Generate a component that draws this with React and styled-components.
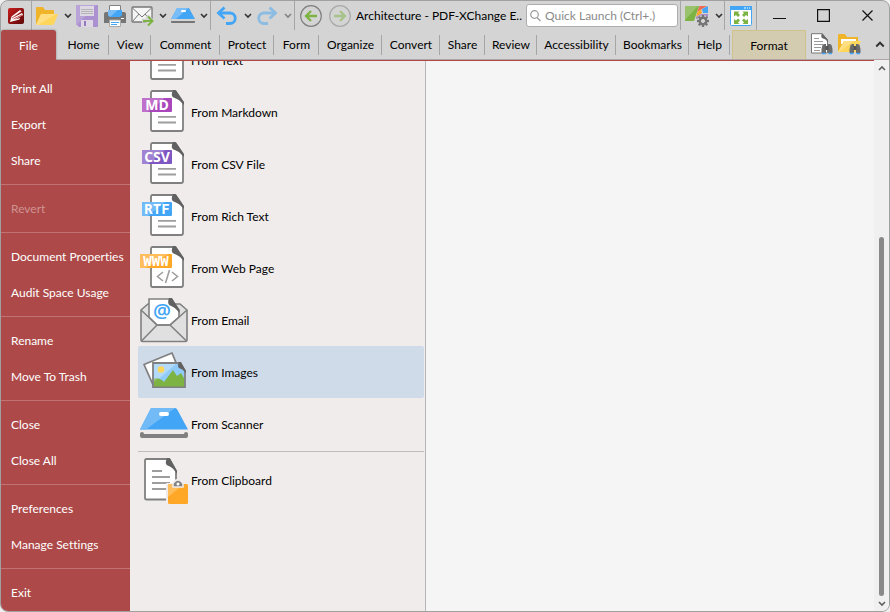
import React, { useState } from 'react';
import styled, { createGlobalStyle, css } from 'styled-components';

const GlobalStyle = createGlobalStyle`
  * {
    box-sizing: border-box;
  }

  body {
    margin: 0;
    background-color: #f0f0f0;
    font-family: Lato, 'Open Sans', sans-serif;
    font-size: 12px;
    font-variant-ligatures: none;
    color: #000;
  }

  button,
  input {
    font: inherit;
    font-variant-ligatures: none;
    color: inherit;
  }
`;

const Window = styled.div`
  display: flex;
  flex-direction: column;
  height: 100vh;
  border: 1px solid #a0a0a0;
  border-radius: 8px;
  overflow: hidden;
  background-color: #d4d4d4;
`;

const TitleBar = styled.header`
  display: flex;
  align-items: center;
  flex: 0 0 29px;
`;

const PlainButton = styled.button`
  display: flex;
  align-items: center;
  justify-content: center;
  flex: none;
  padding: 0;
  border: none;
  background: none;
  white-space: nowrap;
`;

const ToolButton = styled(PlainButton)`
  width: ${(props) => props.$width || 28}px;
  height: 28px;

  svg {
    flex: none;
  }

  &:disabled {
    opacity: 0.5;
  }
`;

const Separator = styled.span`
  flex: 0 0 1px;
  align-self: stretch;
  background-color: #a6a6a6;
`;

const DocumentTitle = styled.h1`
  flex: 1;
  min-width: 0;
  margin: 0 0 0 3px;
  font-size: 12px;
  font-weight: 400;
  white-space: nowrap;
`;

const SearchBox = styled.label`
  display: flex;
  align-items: center;
  flex: none;
  width: 152px;
  height: 23px;
  margin-right: 2px;
  padding: 0 3px;
  gap: 4px;
  border: 1px solid #adadad;
  border-radius: 3px;
  background-color: #fff;
`;

const SearchInput = styled.input`
  flex: 1;
  width: 100%;
  min-width: 0;
  padding: 0;
  border: none;
  outline: none;
  background: none;

  &::placeholder {
    color: #8a8a8a;
    opacity: 1;
  }
`;

const Ribbon = styled.nav`
  display: flex;
  flex: 0 0 30px;
  border-bottom: 1px solid #b0a5a5;
`;

const RibbonTab = styled(PlainButton)`
  width: ${(props) => props.$width}px;
  background: linear-gradient(#a6a6a6, #a6a6a6) right center / 1px 20px no-repeat;
`;

const FileTab = styled(PlainButton)`
  width: 55px;
  margin: 0 2px -1px 0;
  border-radius: 3px 3px 0 0;
  box-shadow: 0 0 2px #777;
  background-color: #ad4a49;
  color: #fff;
`;

const FormatTab = styled(PlainButton)`
  width: 74px;
  margin: 0 2px;
  border: 1px solid #cfc38c;
  border-bottom: none;
  background-color: #d4ccb0;
`;

const Spacer = styled.span`
  flex: 1;
`;

const Body = styled.div`
  display: flex;
  flex: 1;
  min-height: 0;
`;

const Sidebar = styled.aside`
  flex: 0 0 129px;
  padding-top: 5px;
  overflow: hidden;
  background-color: #ad4a49;
  color: #fff;
`;

const SidebarGroup = styled.div`
  padding: 5px 0 6px;

  & + & {
    border-top: 1px solid #bf7473;
  }
`;

const SidebarItem = styled(PlainButton)`
  justify-content: flex-start;
  width: 100%;
  height: 36px;
  padding-left: 10px;

  &:disabled {
    color: #cf9292;
  }
`;

const Content = styled.div`
  display: flex;
  flex: 1;
  min-width: 0;
  border-top: 1px solid #ad4a49;
`;

const Sources = styled.section`
  flex: 0 0 296px;
  padding: 0 1px 0 8px;
  overflow: hidden;
  border-right: 1px solid #b8b8b8;
  background-color: #f0eceb;
`;

/* the list is scrolled by half a row */
const SourceList = styled.ul`
  margin: -27px 0 0;
  padding: 0;
  list-style: none;
`;

const SourceItem = styled.li`
  ${(props) =>
    props.$separated &&
    css`
      margin-top: 1px;
      padding-top: 2px;
      border-top: 1px solid #bdbdbd;
    `}
`;

const SourceButton = styled(PlainButton)`
  justify-content: flex-start;
  width: 100%;
  height: 52px;
  gap: 3px;
  border-radius: 2px;
  background-color: ${(props) => (props.$active ? '#cfdbe9' : 'transparent')};
`;

const Workspace = styled.main`
  flex: 1;
  background-color: #f5f5f5;
`;

const ScrollBar = styled.div`
  display: flex;
  flex-direction: column;
  align-items: center;
  flex: 0 0 15px;
  margin-top: -1px;
  background-color: #f0f0f0;
`;

const ScrollButton = styled(PlainButton)`
  width: 15px;
  height: 15px;
`;

const Track = styled.div`
  display: flex;
  flex-direction: column;
  justify-content: flex-end;
  flex: 1;
`;

const Thumb = styled.div`
  width: 5px;
  height: 69%;
  border-radius: 3px;
  background-color: #898989;
`;

const Chevron = ({ up, size = 8, color = '#333' }) => (
  <svg width={size} height={size} viewBox="0 0 8 8" fill="none" stroke={color} strokeWidth="1.6">
    <path d={up ? 'M1 6L4 3L7 6' : 'M1 2L4 5L7 2'} />
  </svg>
);

const AppIcon = () => (
  <svg width="18" height="18" viewBox="0 0 18 18">
    <defs>
      <linearGradient id="app" x2="1" y2="1">
        <stop stopColor="#c8201f" />
        <stop offset="1" stopColor="#5e0708" />
      </linearGradient>
    </defs>
    <rect x="1" y="1" width="16" height="16" rx="2" fill="url(#app)" />
    <path d="M3 15L4.500 9.500L13 3L14.500 4.500L6.500 10.500L15 6L16 8L8 12.500L13 11L12.500 12.500Z" fill="#fff" />
    <path d="M5 11L14 5M6.500 12L15 8" stroke="#a81516" strokeWidth=".7" />
  </svg>
);

const FolderIcon = () => (
  <svg width="24" height="20" viewBox="0 0 24 20">
    <path d="M1 2Q1 1 2 1H8L10 4H18Q19 4 19 5V18H1Z" fill="#efb42a" />
    <path d="M6 8H23L19 18Q18.500 19 17 19H1Z" fill="#ffd65c" />
    <path d="M6 8H21L3 19H1Z" fill="#ffdf82" />
  </svg>
);

const SaveIcon = () => (
  <svg width="22" height="22" viewBox="0 0 22 22">
    <path d="M1 0H21Q22 0 22 1V21Q22 22 21 22H3L0 19V1Q0 0 1 0Z" fill="#ab91d0" />
    <path d="M0 1Q0 0 1 0H20L1 20L0 19Z" fill="#b9a4d8" />
    <path d="M4 1H18V11H4ZM5 15H17V22H5Z" fill="#ddd8e3" />
    <path d="M5 4.500H17M5 6.500H17M5 8.500H17" stroke="#b5b5b5" />
    <path d="M8 16H10V21H8Z" fill="#9479bd" />
  </svg>
);

const PrintIcon = () => (
  <svg width="22" height="22" viewBox="0 0 22 22">
    <path d="M5.500 .5H16.500V6H5.500Z" fill="#fff" stroke="#808080" />
    <path d="M0 9Q0 7 2 7H20Q22 7 22 9V18H0Z" fill="#757575" />
    <path d="M4 5H18V10L16 12H6L4 10Z" fill="#42a5f5" />
    <path d="M4 5H14L6 12L4 10Z" fill="#78bdf7" />
    <path d="M5.500 15H16.500V21.500H5.500Z" fill="#fff" stroke="#aaa" />
    <path d="M7 17.500H15M7 19.500H13" stroke="#42a5f5" />
    <path d="M17 13.500H20" stroke="#fff" />
  </svg>
);

const MailIcon = () => (
  <svg width="24" height="20" viewBox="0 0 24 20" fill="none">
    <rect x="1" y="1" width="20" height="15" rx="1" fill="#f5f5f5" stroke="#777" strokeWidth="1.300" />
    <path d="M1.500 2L11 11L20.500 2M1.500 15.500L8 8M20.500 15.500L14 8" stroke="#777" />
    <path d="M11 14.500H21M16 10L20.500 14.500L16 19" stroke="#d4d4d4" strokeWidth="4" />
    <path d="M12 15H21M17 10.500L21.500 15L17 19.500" stroke="#7cb342" strokeWidth="2" />
  </svg>
);

const ScanIcon = () => (
  <svg width="24" height="16" viewBox="0 0 24 16">
    <path d="M6.500 0H17.500Q18 0 18.500 1L24 11H0L5.500 1Q6 0 6.500 0Z" fill="#42a5f5" />
    <path d="M6.500 0H17.500L5 11H0L5.500 1Q6 0 6.500 0Z" fill="#78bdf7" />
    <rect x="10" y="2" width="5" height="2" rx="1" fill="#fff" />
    <path d="M1 13V14H23V13" fill="none" stroke="#757575" strokeWidth="2" strokeLinejoin="round" />
  </svg>
);

const UndoIcon = ({ flip }) => (
  <svg width="22" height="20" viewBox="0 0 22 20" fill="none" stroke="#42a5f5" strokeWidth="2.800">
    <g transform={flip ? 'translate(22 0) scale(-1 1)' : undefined}>
      <path d="M8.500 1.500L2.500 7L8.500 12.500" />
      <path d="M3 7H14A5 5 0 0 1 14 17.500H10" />
    </g>
  </svg>
);

const CircleArrow = ({ flip }) => (
  <svg width="22" height="22" viewBox="0 0 22 22" fill="none">
    <circle cx="11" cy="11" r="10.300" stroke="#808080" strokeWidth="1.200" />
    <g transform={flip ? 'translate(22 0) scale(-1 1)' : undefined} stroke="#7cb342" strokeWidth="2.300">
      <path d="M6 11H17M11 6L6 11L11 16" />
    </g>
  </svg>
);

const SearchIcon = () => (
  <svg width="11" height="12" viewBox="0 0 11 12" fill="none" stroke="#999" strokeWidth="1.200">
    <circle cx="4.500" cy="4.500" r="3.800" />
    <path d="M7 7.500L10.500 11" />
  </svg>
);

const gearTeeth = [0, 45, 90, 135, 180, 225, 270, 315];

const WorkspaceIcon = () => (
  <svg width="24" height="22" viewBox="0 0 24 22">
    <path d="M0 1H14L9 16H0Z" fill="#7cb342" />
    <path d="M0 1H13L0 15Z" fill="#98c26b" />
    <path d="M14.500 1H22L12 7Z" fill="#ed6b51" />
    <path d="M12.500 7L16 4.500L17 8L11 12Z" fill="#ffa726" />
    <path d="M17 4L23 1V8H18Z" fill="#42a5f5" />
    <path d="M11 12L16 9H23V14H11Z" fill="#a98bcc" />
    <g transform="translate(18 16)">
      <circle r="6" fill="#d4d4d4" />
      {gearTeeth.map((angle) => (
        <rect key={angle} x="-1.200" y="-6" width="2.400" height="4" fill="#757575" transform={`rotate(${angle})`} />
      ))}
      <circle r="3.300" fill="none" stroke="#757575" strokeWidth="2.200" />
    </g>
  </svg>
);

const FullScreenIcon = () => (
  <svg width="22" height="20" viewBox="0 0 22 20">
    <rect x=".5" y=".5" width="21" height="19" rx="1" fill="#fff" stroke="#42a5f5" />
    <path d="M0 0H22V4H0Z" fill="#42a5f5" />
    <path d="M14 2H16M17 2H18M19 2H20" stroke="#fff" />
    <g fill="#7cb342">
      <path d="M4 5.500H9.500L8 7L10 9L8 11L6 9L4 10.500Z" />
      <path d="M18 5.500H12.500L14 7L12 9L14 11L16 9L18 10.500Z" />
      <path d="M4 18H9.500L8 16.500L10 14.500L8 12.500L6 14.500L4 13Z" />
      <path d="M18 18H12.500L14 16.500L12 14.500L14 12.500L16 14.500L18 13Z" />
    </g>
  </svg>
);

const Binoculars = () => (
  <g>
    <path d="M12.500 12L14 11H16V20H11.500V16ZM18 11H20L21.500 12L22.500 16V20H18Z" fill="#6b6b6b" />
    <path d="M15.500 13H18.500V17H15.500Z" fill="#555" />
    <path d="M12 20.500H15.500M18.500 20.500H22" stroke="#42a5f5" strokeWidth="1.600" />
  </g>
);

const FindDocIcon = () => (
  <svg width="24" height="22" viewBox="0 0 24 22">
    <path d="M1.500 .7H12L17.500 7V20H1.500Z" fill="#fff" stroke="#777" />
    <path d="M12 0Q10.500 4 12 5Q16 6 18 9V7Z" fill="#666" />
    <path d="M4 5.500H9M4 8.500H13M4 11.500H13M4 14.500H11M4 17.500H10" stroke="#999" />
    <Binoculars />
  </svg>
);

const FindFolderIcon = () => (
  <svg width="24" height="22" viewBox="0 0 24 22">
    <path d="M0 2Q0 1 1 1H7L9 4H20V18H0Z" fill="#efb42a" />
    <path d="M3 6H18V11H3Z" fill="#fff" />
    <path d="M6 8H23L18 19H0Z" fill="#ffd65c" />
    <path d="M6 8H16L1 19H0Z" fill="#ffdf82" />
    <Binoculars />
  </svg>
);

const WindowIcon = ({ d }) => (
  <svg width="13" height="13" viewBox="0 0 13 13" fill="none" stroke="#111" strokeWidth="1.200">
    <path d={d} />
  </svg>
);

const ListIcon = ({ children }) => (
  <svg width="50" height="52" viewBox="0 0 50 52">
    {children}
  </svg>
);

const FileIcon = ({ label, color, light, wide, mono }) => (
  <ListIcon>
    <path
      d="M14.500 5H37L45 17V43Q45 45 43 45H14.500Q13 45 13 43V7Q13 5 14.500 5Z"
      fill="#fff"
      stroke="#808080"
      strokeWidth="1.800"
    />
    <path d="M35 4Q32.500 9 35 11.200Q41 13 46 19V16L38 4.200Z" fill="#616161" />
    {wide ? (
      <path
        d="M25 30L19.500 34.500L25 39M34 30L39.500 34.500L34 39M31.500 28L27.500 41"
        fill="none"
        stroke="#9e9e9e"
        strokeWidth="1.600"
      />
    ) : (
      <path d="M20 30.800H38M20 36.500H38" stroke="#9e9e9e" strokeWidth="1.800" />
    )}
    <rect x={wide ? 2 : 4} y="12" width={wide ? 32 : 30} height="14" rx="1" fill={color} />
    <path d={wide ? 'M3 12H31L8 26H3L2 25V13Z' : 'M5 12H27L10 26H5L4 25V13Z'} fill={light} />
    <text
      x={wide ? 18 : 19}
      y="24"
      textAnchor="middle"
      fontFamily={mono ? "'DejaVu Sans Mono', monospace" : "'Open Sans', sans-serif"}
      fontWeight="700"
      fontSize="14"
      fill="#fff"
    >
      {label}
    </text>
  </ListIcon>
);

const EmailIcon = () => (
  <ListIcon>
    <path d="M3 16L10 10H42L49 16V46Q49 47.500 47.500 47.500H4.500Q3 47.500 3 46Z" fill="#e0e0e0" stroke="#808080" strokeWidth="1.600" />
    <path d="M11 5H33L41 16V23L32 31H19L11 23Z" fill="#fff" stroke="#808080" strokeWidth="1.600" />
    <path d="M31 4Q29 9 31.500 11.200Q37 13 41.500 19V16L34 4Z" fill="#616161" />
    <text x="24" y="24" textAnchor="middle" fontFamily="'Open Sans', sans-serif" fontSize="20" fontWeight="600" fill="#42a5f5">
      @
    </text>
    <path d="M3 16L19 31H32L49 16M3.500 47L19 31M48.500 47L32 31" fill="none" stroke="#808080" strokeWidth="1.500" />
  </ListIcon>
);

const ImagesIcon = () => (
  <ListIcon>
    <path d="M6 18.500L34 7L44 31L16 41Z" fill="#fff" stroke="#808080" strokeWidth="1.800" strokeLinejoin="round" />
    <path d="M15 17H42L47 25V41H15Z" fill="#90caf9" stroke="#808080" strokeWidth="1.800" />
    <path d="M16 18H38L16 37Z" fill="#b3daf8" />
    <circle cx="23" cy="23.500" r="3.300" fill="#ffd65c" />
    <path d="M16 33Q22 31 26 36L35 24L39 30L43 27L46 32V40.500H16Z" fill="#7cb342" />
    <path d="M16 33Q18 32 20 32.500L16 36Z" fill="#98c26b" />
    <path d="M41 16Q39 20 41 22Q45 23 48 27V25L43 16Z" fill="#616161" />
  </ListIcon>
);

const ScannerIcon = () => (
  <ListIcon>
    <path d="M14 10H37Q38.500 10 39.500 12L50 31.500H2L12 12Q12.500 10 14 10Z" fill="#42a5f5" />
    <path d="M14 10H37L8 31.500H2L12 12Q12.500 10 14 10Z" fill="#72bbf7" />
    <rect x="21" y="14" width="10" height="4" rx="2" fill="#fff" />
    <path d="M2 36Q2 34 4 34Q6 34 6 36H46Q46 34 48 34Q50 34 50 36V38Q50 40 48 40H4Q2 40 2 38Z" fill="#808080" />
  </ListIcon>
);

const ClipboardIcon = () => (
  <ListIcon>
    <path d="M8.500 5H31L38 17V45.500H8.500Q7 45.500 7 44V6.500Q7 5 8.500 5Z" fill="#fff" stroke="#808080" strokeWidth="1.800" />
    <path d="M29 4Q26.500 9 29 11.200Q35 13 39 20V17L32 4.200Z" fill="#616161" />
    <path d="M14 17H24M14 23H32M14 29H32M14 35H28" stroke="#9e9e9e" strokeWidth="1.800" />
    <path d="M28 29H35Q36 25 40 25Q44 25 45 29H50V50H28Z" fill="#f0eceb" />
    <rect x="30" y="30" width="20" height="20" rx="1.500" fill="#ffa726" />
    <path d="M31 30H46L30 43V31Z" fill="#ffbd5c" />
    <path d="M35 33V30Q37 26 40 26Q43 26 45 30V33Z" fill="#808080" stroke="#f0eceb" strokeWidth="1.500" />
    <circle cx="40" cy="30" r="1.500" fill="#fff" />
  </ListIcon>
);

const sources = [
  { name: 'From Text', icon: <FileIcon label="TXT" color="#7cb342" light="#98c26b" mono /> },
  { name: 'From Markdown', icon: <FileIcon label="MD" color="#ab47bc" light="#bf70cb" /> },
  { name: 'From CSV File', icon: <FileIcon label="CSV" color="#7e57c2" light="#a083d2" /> },
  { name: 'From Rich Text', icon: <FileIcon label="RTF" color="#42a5f5" light="#72bbf7" mono /> },
  { name: 'From Web Page', icon: <FileIcon label="WWW" color="#ffa726" light="#ffbd5c" wide mono /> },
  { name: 'From Email', icon: <EmailIcon /> },
  { name: 'From Images', icon: <ImagesIcon /> },
  { name: 'From Scanner', icon: <ScannerIcon /> },
  { name: 'From Clipboard', icon: <ClipboardIcon />, separated: true },
];

const tabs = [
  ['Home', 51],
  ['View', 42],
  ['Comment', 69],
  ['Protect', 54],
  ['Form', 45],
  ['Organize', 63],
  ['Convert', 58],
  ['Share', 45],
  ['Review', 52],
  ['Accessibility', 79],
  ['Bookmarks', 73],
  ['Help', 41],
];

const menuGroups = [
  ['Print All', 'Export', 'Share'],
  ['Revert'],
  ['Document Properties', 'Audit Space Usage'],
  ['Rename', 'Move To Trash'],
  ['Close', 'Close All'],
  ['Preferences', 'Manage Settings'],
  ['Exit'],
];

function App() {
  const [active, setActive] = useState('From Images');
  const [query, setQuery] = useState('');

  return (
    <>
      <GlobalStyle />
      <Window>
        <TitleBar>
          <ToolButton $width={30} aria-label="Application menu"><AppIcon /></ToolButton>
          <Separator />
          <ToolButton $width={30} aria-label="Open"><FolderIcon /></ToolButton>
          <ToolButton $width={11} aria-label="Open options"><Chevron /></ToolButton>
          <ToolButton aria-label="Save"><SaveIcon /></ToolButton>
          <ToolButton aria-label="Print"><PrintIcon /></ToolButton>
          <ToolButton aria-label="Send by email"><MailIcon /></ToolButton>
          <ToolButton $width={12} aria-label="Email options"><Chevron /></ToolButton>
          <ToolButton aria-label="Scan"><ScanIcon /></ToolButton>
          <ToolButton $width={13} aria-label="Scan options"><Chevron /></ToolButton>
          <Separator />
          <ToolButton $width={32} aria-label="Undo"><UndoIcon /></ToolButton>
          <ToolButton $width={9} aria-label="Undo history"><Chevron /></ToolButton>
          <ToolButton $width={29} aria-label="Redo" disabled><UndoIcon flip /></ToolButton>
          <ToolButton $width={13} aria-label="Redo history" disabled><Chevron /></ToolButton>
          <Separator />
          <ToolButton $width={31} aria-label="Previous view"><CircleArrow /></ToolButton>
          <ToolButton $width={27} aria-label="Next view" disabled><CircleArrow flip /></ToolButton>
          <DocumentTitle>Architecture - PDF-XChange E..</DocumentTitle>
          <SearchBox>
            <SearchIcon />
            <SearchInput
              type="text"
              aria-label="Quick Launch"
              placeholder="Quick Launch (Ctrl+.)"
              value={query}
              onChange={(e) => setQuery(e.target.value)}
            />
          </SearchBox>
          <Separator />
          <ToolButton $width={32} aria-label="UI options"><WorkspaceIcon /></ToolButton>
          <ToolButton $width={11} aria-label="More UI options"><Chevron /></ToolButton>
          <Separator />
          <ToolButton $width={31} aria-label="Full screen"><FullScreenIcon /></ToolButton>
          <Separator />
          <ToolButton $width={44} aria-label="Minimize"><WindowIcon d="M0 9.500H13" /></ToolButton>
          <ToolButton $width={44} aria-label="Maximize"><WindowIcon d="M.6 .6H12.400V12.400H.6Z" /></ToolButton>
          <ToolButton $width={44} aria-label="Close window"><WindowIcon d="M1.500 1.500L11.500 11.500M11.500 1.500L1.500 11.500" /></ToolButton>
        </TitleBar>

        <Ribbon>
          <FileTab>File</FileTab>
          {tabs.map(([label, width]) => (
            <RibbonTab key={label} $width={width}>{label}</RibbonTab>
          ))}
          <FormatTab>Format</FormatTab>
          <ToolButton aria-label="Find in document"><FindDocIcon /></ToolButton>
          <ToolButton aria-label="Search in folder"><FindFolderIcon /></ToolButton>
          <Spacer />
          <ToolButton $width={19} aria-label="Collapse ribbon"><Chevron up size={10} /></ToolButton>
        </Ribbon>

        <Body>
          <Sidebar>
            {menuGroups.map((group) => (
              <SidebarGroup key={group[0]}>
                {group.map((item) => (
                  <SidebarItem key={item} disabled={item === 'Revert'}>{item}</SidebarItem>
                ))}
              </SidebarGroup>
            ))}
          </Sidebar>
          <Content>
            <Sources>
              <SourceList>
                {sources.map(({ name, icon, separated }) => (
                  <SourceItem key={name} $separated={separated}>
                    <SourceButton $active={name === active} onClick={() => setActive(name)}>
                      {icon}
                      {name}
                    </SourceButton>
                  </SourceItem>
                ))}
              </SourceList>
            </Sources>
            <Workspace />
            <ScrollBar>
              <ScrollButton aria-label="Scroll up"><Chevron up color="#606060" /></ScrollButton>
              <Track>
                <Thumb />
              </Track>
              <ScrollButton aria-label="Scroll down"><Chevron color="#606060" /></ScrollButton>
            </ScrollBar>
          </Content>
        </Body>
      </Window>
    </>
  );
}

export default App;
